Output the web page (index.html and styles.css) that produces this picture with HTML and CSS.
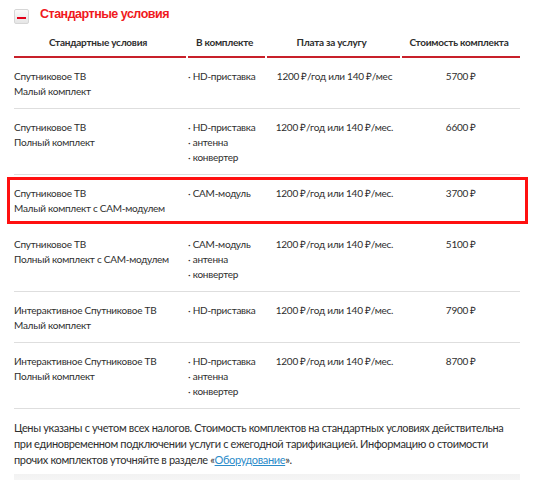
FILE: index.html
```html
<!DOCTYPE html>
<html lang="ru">
<head>
<meta charset="utf-8">
<link rel="stylesheet" href="styles.css">
</head>
<body>
<div class="page">
  <div class="section-head">
    <span class="toggle"><span class="toggle-bar"></span></span>
    <h2 class="section-title">Стандартные условия</h2>
  </div>
  <div class="table">
    <div class="row head">
      <div class="th">Стандартные условия</div>
      <div class="th">В комплекте</div>
      <div class="th">Плата за услугу</div>
      <div class="th">Стоимость комплекта</div>
    </div>
    <div class="row">
      <div class="cell name">Спутниковое ТВ<br>Малый комплект</div>
      <div class="cell items">· HD-приставка</div>
      <div class="cell fee">1200 ₽/год или 140 ₽/мес</div>
      <div class="cell price">5700 ₽</div>
    </div>
    <div class="row">
      <div class="cell name">Спутниковое ТВ<br>Полный комплект</div>
      <div class="cell items">· HD-приставка<br>· антенна<br>· конвертер</div>
      <div class="cell fee">1200 ₽/год или 140 ₽/мес.</div>
      <div class="cell price">6600 ₽</div>
    </div>
    <div class="row marked">
      <div class="cell name">Спутниковое ТВ<br>Малый комплект с CAM-модулем</div>
      <div class="cell items">· CAM-модуль</div>
      <div class="cell fee">1200 ₽/год или 140 ₽/мес.</div>
      <div class="cell price">3700 ₽</div>
    </div>
    <div class="row">
      <div class="cell name">Спутниковое ТВ<br>Полный комплект с CAM-модулем</div>
      <div class="cell items">· CAM-модуль<br>· антенна<br>· конвертер</div>
      <div class="cell fee">1200 ₽/год или 140 ₽/мес.</div>
      <div class="cell price">5100 ₽</div>
    </div>
    <div class="row">
      <div class="cell name">Интерактивное Спутниковое ТВ<br>Малый комплект</div>
      <div class="cell items">· HD-приставка</div>
      <div class="cell fee">1200 ₽/год или 140 ₽/мес.</div>
      <div class="cell price">7900 ₽</div>
    </div>
    <div class="row">
      <div class="cell name">Интерактивное Спутниковое ТВ<br>Полный комплект</div>
      <div class="cell items">· HD-приставка<br>· антенна<br>· конвертер</div>
      <div class="cell fee">1200 ₽/год или 140 ₽/мес.</div>
      <div class="cell price">8700 ₽</div>
    </div>
  </div>
  <p class="note">Цены указаны с учетом всех налогов. Стоимость комплектов на стандартных условиях действительна при единовременном подключении услуги с ежегодной тарификацией. Информацию о стоимости прочих комплектов уточняйте в разделе «<a href="#" class="link">Оборудование</a>».</p>
  <div class="bottom-band"></div>
</div>
</body>
</html>
```
FILE: styles.css
```css
* { box-sizing: border-box; }
html, body { margin: 0; padding: 0; background: #fff; }
body {
  font-family: Lato, "Open Sans", sans-serif;
  font-size: 10px;
  letter-spacing: -0.25px;
  color: #2e2e2e;
  overflow: hidden;
}
.page {
  width: 535px;
  height: 480px;
  padding: 4px 15px 0 14px;
}
.section-head {
  display: flex;
  align-items: center;
  gap: 11px;
  height: 20px;
}
.toggle {
  width: 15px;
  height: 15px;
  border: 1px solid #d6d6d6;
  border-radius: 2px;
  background: linear-gradient(#fafafa, #e6e6e6);
  display: flex;
  align-items: center;
  justify-content: center;
  margin-top: 5px;
}
.toggle-bar {
  width: 9px;
  height: 2px;
  background: #e2001a;
  margin-top: 3px;
}
.section-title {
  margin: 0;
  font-family: "Liberation Sans", Arial, sans-serif;
  font-weight: bold;
  font-size: 12.5px;
  color: #f01820;
  letter-spacing: -0.5px;
}
.table { margin-top: 6px; }
.row {
  display: grid;
  grid-template-columns: 174px 79px 135px 118px;
  border-bottom: 1px solid #dedede;
  position: relative;
}
.row.head { border-bottom: none; }
.th {
  font-weight: bold;
  text-align: center;
  line-height: 15px;
  padding: 5px 4px 6px 0;
  border-bottom: 2px solid #c8202a;
  margin-right: 2px;
}
.th:last-child { margin-right: 0; }
.cell {
  line-height: 15px;
  padding: 11px 0 9px;
}
.cell.fee, .cell.price { text-align: center; }
.row.marked { border-bottom-color: transparent; }
.row.marked::after {
  content: "";
  position: absolute;
  left: -7px;
  right: -8px;
  top: 2px;
  bottom: 1px;
  border: 3px solid #ff1010;
  pointer-events: none;
}
.note {
  margin: 11px 0 0;
  line-height: 16px;
  font-size: 11px;
  letter-spacing: -0.35px;
}
.link { color: #2a8bc9; text-decoration: underline; }
.bottom-band {
  margin-top: 6px;
  height: 14px;
  background: linear-gradient(#f2f2f2, #fafafa);
}
```
